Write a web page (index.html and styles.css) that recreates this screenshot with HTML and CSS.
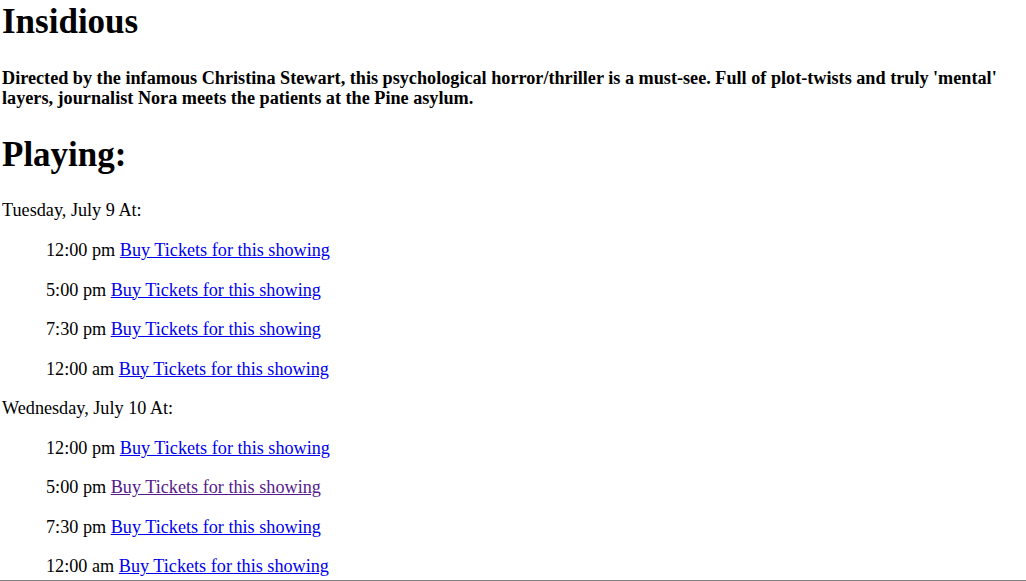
FILE: index.html
```html
<!DOCTYPE html>
<html lang="en">
<head>
<meta charset="utf-8">
<title>Insidious</title>
<link rel="stylesheet" href="styles.css">
</head>
<body class="page">
  <h1 class="title">Insidious</h1>
  <p class="blurb">Directed by the infamous Christina Stewart, this psychological horror/thriller is a must-see. Full of plot-twists and truly 'mental' layers, journalist Nora meets the patients at the Pine asylum.</p>
  <h2 class="section-title">Playing:</h2>

  <div class="day">
    <p class="day-label">Tuesday, July 9 At:</p>
    <p class="showing">12:00 pm <a class="ticket" href="#">Buy Tickets for this showing</a></p>
    <p class="showing">5:00 pm <a class="ticket" href="#">Buy Tickets for this showing</a></p>
    <p class="showing">7:30 pm <a class="ticket" href="#">Buy Tickets for this showing</a></p>
    <p class="showing">12:00 am <a class="ticket" href="#">Buy Tickets for this showing</a></p>
  </div>

  <div class="day">
    <p class="day-label">Wednesday, July 10 At:</p>
    <p class="showing">12:00 pm <a class="ticket" href="#">Buy Tickets for this showing</a></p>
    <p class="showing">5:00 pm <a class="ticket ticket-visited" href="#">Buy Tickets for this showing</a></p>
    <p class="showing">7:30 pm <a class="ticket" href="#">Buy Tickets for this showing</a></p>
    <p class="showing">12:00 am <a class="ticket" href="#">Buy Tickets for this showing</a></p>
  </div>

  <div class="window-edge"></div>
</body>
</html>
```

FILE: styles.css
```css
html, body {
  background: #ffffff;
}

.page {
  margin: 0 0 0 2px;
  font-family: "Liberation Serif", "Times New Roman", serif;
  font-size: 18.2px;
  color: #000000;
  overflow: hidden;
}

.title {
  margin: 0;
  font-size: 35px;
  line-height: 43px;
  font-weight: bold;
}

.blurb {
  margin: 24.5px 0 0 0;
  font-size: 18.2px;
  line-height: 20.7px;
  font-weight: bold;
}

.section-title {
  margin: 24px 0 24.5px 0;
  font-size: 35px;
  line-height: 43px;
  font-weight: bold;
}

.day-label,
.showing {
  margin: 19.55px 0;
  line-height: 20px;
}

.day:first-of-type .day-label {
  margin-top: 0;
}

.showing {
  padding-left: 44px;
}

.ticket {
  color: #0000ee;
  text-decoration: underline;
}

.ticket-visited {
  color: #551a8b;
}

.window-edge {
  position: fixed;
  left: 0;
  right: 0;
  bottom: 0;
  height: 1px;
  background: #808080;
}
```
